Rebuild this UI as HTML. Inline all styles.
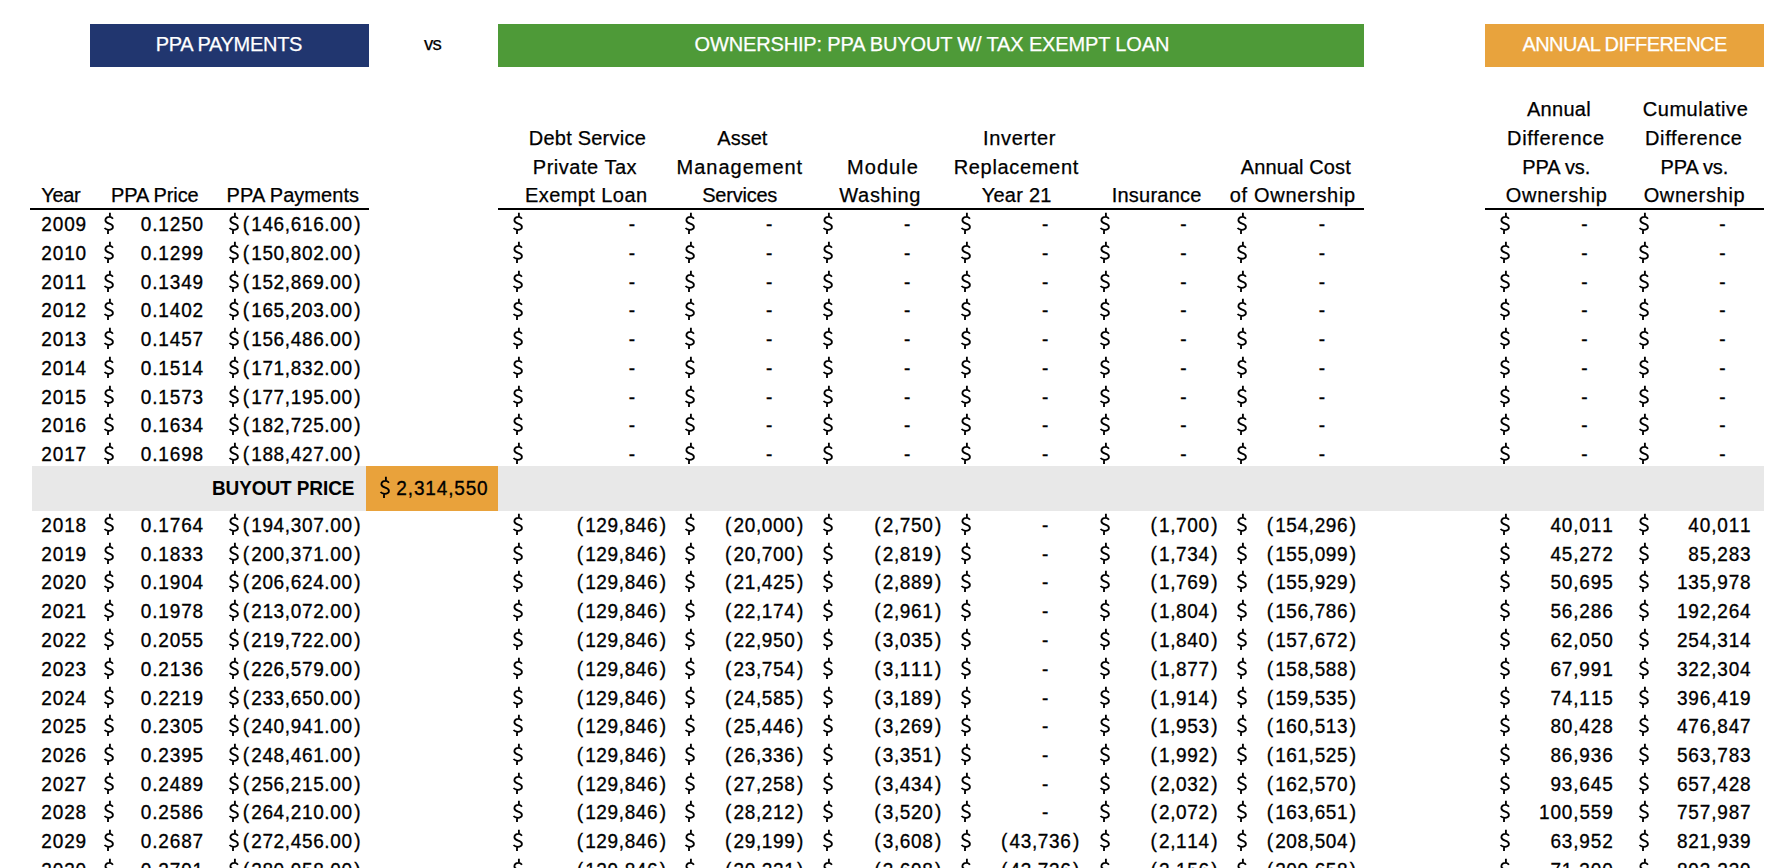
<!DOCTYPE html>
<html><head><meta charset="utf-8"><title>PPA vs Ownership</title>
<style>
html,body{margin:0;padding:0;background:#fff;}
body{width:1782px;height:868px;overflow:hidden;position:relative;font-family:"Liberation Sans",sans-serif;color:#000;}
.t{position:absolute;white-space:pre;font-size:19.0px;line-height:24px;height:24px;transform:scaleY(1.07);transform-origin:0 18px;-webkit-text-stroke:0.3px currentColor;}
.n{letter-spacing:0.0px;font-kerning:none;font-variant-numeric:tabular-nums;}
.h{font-size:20px;transform:none;-webkit-text-stroke:0.25px currentColor;}
.b{font-weight:bold;-webkit-text-stroke:0;}
.r{position:absolute;}
.t i{font-style:normal;margin:0 1.5px;}
.d{position:absolute;width:12px;height:25px;overflow:visible;}
</style></head><body>
<svg width="0" height="0" style="position:absolute"><defs><symbol id="ds" viewBox="-1 -20 12 25"><path d="M8.9,-12.3C8.1,-13.6 6.9,-14.2 5.4,-14.2C3.1,-14.2 1.4,-12.8 1.4,-10.7C1.4,-8.9 2.8,-8.1 5.2,-7.3C7.6,-6.5 8.9,-5.7 8.9,-4.1C8.9,-2.3 7.2,-1.2 4.8,-1.2C3,-1.2 1.5,-1.8 0.5,-3M5.9,-18.2V-14M4,-1.4V3" fill="none" stroke="#000" stroke-width="1.85"/></symbol></defs></svg>
<div class="r" style="left:90px;top:24px;width:279px;height:42.7px;background:#21366f"></div>
<div class="r" style="left:498px;top:24px;width:866px;height:42.7px;background:#4e9a38"></div>
<div class="r" style="left:1485.2px;top:24px;width:278.8px;height:42.7px;background:#e8a33d"></div>
<div class="r" style="left:30px;top:208px;width:339px;height:2px;background:#000"></div>
<div class="r" style="left:498px;top:208px;width:866px;height:2px;background:#000"></div>
<div class="r" style="left:1485.2px;top:208px;width:278.8px;height:2px;background:#000"></div>
<div class="r" style="left:32px;top:466.3px;width:1732px;height:45.2px;background:#e8e8e8"></div>
<div class="r" style="left:366px;top:466.3px;width:132px;height:45.2px;background:#e9a23b"></div>
<span class="t h" style="left:155.70px;top:32.00px;letter-spacing:-0.301px;color:#fff">PPA PAYMENTS</span>
<span class="t h" style="left:424.05px;top:32.00px;letter-spacing:-0.750px;font-size:18.5px">vs</span>
<span class="t h" style="left:694.50px;top:32.00px;letter-spacing:-0.144px;color:#fff">OWNERSHIP: PPA BUYOUT W/ TAX EXEMPT LOAN</span>
<span class="t h" style="left:1522.45px;top:32.00px;letter-spacing:-0.556px;color:#fff">ANNUAL DIFFERENCE</span>
<span class="t h" style="left:41.35px;top:183.00px;letter-spacing:-0.354px">Year</span>
<span class="t h" style="left:111.05px;top:183.00px;letter-spacing:-0.117px">PPA Price</span>
<span class="t h" style="left:226.60px;top:183.00px;letter-spacing:0.043px">PPA Payments</span>
<span class="t h" style="left:528.75px;top:126.00px;letter-spacing:0.229px">Debt Service</span>
<span class="t h" style="left:532.85px;top:155.00px;letter-spacing:0.512px">Private Tax</span>
<span class="t h" style="left:525.05px;top:183.00px;letter-spacing:0.416px">Exempt Loan</span>
<span class="t h" style="left:717.35px;top:126.00px;letter-spacing:0.006px">Asset</span>
<span class="t h" style="left:676.60px;top:155.00px;letter-spacing:0.979px">Management</span>
<span class="t h" style="left:702.25px;top:183.00px;letter-spacing:-0.229px">Services</span>
<span class="t h" style="left:847.05px;top:155.00px;letter-spacing:1.043px">Module</span>
<span class="t h" style="left:839.25px;top:183.00px;letter-spacing:0.691px">Washing</span>
<span class="t h" style="left:983.00px;top:126.00px;letter-spacing:0.664px">Inverter</span>
<span class="t h" style="left:953.70px;top:155.00px;letter-spacing:0.671px">Replacement</span>
<span class="t h" style="left:981.65px;top:183.00px;letter-spacing:0.267px">Year 21</span>
<span class="t h" style="left:1111.65px;top:183.00px;letter-spacing:0.247px">Insurance</span>
<span class="t h" style="left:1240.85px;top:155.00px;letter-spacing:0.089px">Annual Cost</span>
<span class="t h" style="left:1229.75px;top:183.00px;letter-spacing:0.689px">of Ownership</span>
<span class="t h" style="left:1526.95px;top:97.00px;letter-spacing:0.292px">Annual</span>
<span class="t h" style="left:1507.05px;top:126.00px;letter-spacing:0.692px">Difference</span>
<span class="t h" style="left:1522.25px;top:155.00px;letter-spacing:-0.082px">PPA vs.</span>
<span class="t h" style="left:1505.80px;top:183.00px;letter-spacing:0.689px">Ownership</span>
<span class="t h" style="left:1642.70px;top:97.00px;letter-spacing:0.564px">Cumulative</span>
<span class="t h" style="left:1644.95px;top:126.00px;letter-spacing:0.692px">Difference</span>
<span class="t h" style="left:1660.55px;top:155.00px;letter-spacing:-0.148px">PPA vs.</span>
<span class="t h" style="left:1643.65px;top:183.00px;letter-spacing:0.677px">Ownership</span>
<span class="t b" style="left:212.00px;top:477.00px;letter-spacing:-0.100px">BUYOUT PRICE</span>
<svg class="d" style="left:379.00px;top:475.00px"><use href="#ds"/></svg>
<span class="t n" style="left:396.37px;top:477.00px;letter-spacing:0.850px">2,314,550</span>
<span class="t n" style="left:41.37px;top:213.00px;letter-spacing:0.850px">2009</span>
<svg class="d" style="left:103.00px;top:211.00px"><use href="#ds"/></svg>
<span class="t n" style="left:140.83px;top:213.00px;letter-spacing:0.850px">0.1250</span>
<svg class="d" style="left:227.75px;top:211.00px"><use href="#ds"/></svg>
<span class="t n" style="left:242.74px;top:213.00px;letter-spacing:0.640px">(<i>146,616.00</i>)</span>
<svg class="d" style="left:511.60px;top:211.00px"><use href="#ds"/></svg>
<span class="t n" style="left:628.80px;top:213.00px">-</span>
<svg class="d" style="left:683.70px;top:211.00px"><use href="#ds"/></svg>
<span class="t n" style="left:766.00px;top:213.00px">-</span>
<svg class="d" style="left:822.00px;top:211.00px"><use href="#ds"/></svg>
<span class="t n" style="left:904.00px;top:213.00px">-</span>
<svg class="d" style="left:960.00px;top:211.00px"><use href="#ds"/></svg>
<span class="t n" style="left:1042.00px;top:213.00px">-</span>
<svg class="d" style="left:1098.50px;top:211.00px"><use href="#ds"/></svg>
<span class="t n" style="left:1180.20px;top:213.00px">-</span>
<svg class="d" style="left:1236.40px;top:211.00px"><use href="#ds"/></svg>
<span class="t n" style="left:1318.80px;top:213.00px">-</span>
<svg class="d" style="left:1499.00px;top:211.00px"><use href="#ds"/></svg>
<span class="t n" style="left:1581.30px;top:213.00px">-</span>
<svg class="d" style="left:1637.50px;top:211.00px"><use href="#ds"/></svg>
<span class="t n" style="left:1719.20px;top:213.00px">-</span>
<span class="t n" style="left:41.37px;top:242.00px;letter-spacing:0.850px">2010</span>
<svg class="d" style="left:103.00px;top:240.00px"><use href="#ds"/></svg>
<span class="t n" style="left:140.83px;top:242.00px;letter-spacing:0.850px">0.1299</span>
<svg class="d" style="left:227.75px;top:240.00px"><use href="#ds"/></svg>
<span class="t n" style="left:242.74px;top:242.00px;letter-spacing:0.640px">(<i>150,802.00</i>)</span>
<svg class="d" style="left:511.60px;top:240.00px"><use href="#ds"/></svg>
<span class="t n" style="left:628.80px;top:242.00px">-</span>
<svg class="d" style="left:683.70px;top:240.00px"><use href="#ds"/></svg>
<span class="t n" style="left:766.00px;top:242.00px">-</span>
<svg class="d" style="left:822.00px;top:240.00px"><use href="#ds"/></svg>
<span class="t n" style="left:904.00px;top:242.00px">-</span>
<svg class="d" style="left:960.00px;top:240.00px"><use href="#ds"/></svg>
<span class="t n" style="left:1042.00px;top:242.00px">-</span>
<svg class="d" style="left:1098.50px;top:240.00px"><use href="#ds"/></svg>
<span class="t n" style="left:1180.20px;top:242.00px">-</span>
<svg class="d" style="left:1236.40px;top:240.00px"><use href="#ds"/></svg>
<span class="t n" style="left:1318.80px;top:242.00px">-</span>
<svg class="d" style="left:1499.00px;top:240.00px"><use href="#ds"/></svg>
<span class="t n" style="left:1581.30px;top:242.00px">-</span>
<svg class="d" style="left:1637.50px;top:240.00px"><use href="#ds"/></svg>
<span class="t n" style="left:1719.20px;top:242.00px">-</span>
<span class="t n" style="left:41.37px;top:271.00px;letter-spacing:0.850px">2011</span>
<svg class="d" style="left:103.00px;top:269.00px"><use href="#ds"/></svg>
<span class="t n" style="left:140.83px;top:271.00px;letter-spacing:0.850px">0.1349</span>
<svg class="d" style="left:227.75px;top:269.00px"><use href="#ds"/></svg>
<span class="t n" style="left:242.74px;top:271.00px;letter-spacing:0.640px">(<i>152,869.00</i>)</span>
<svg class="d" style="left:511.60px;top:269.00px"><use href="#ds"/></svg>
<span class="t n" style="left:628.80px;top:271.00px">-</span>
<svg class="d" style="left:683.70px;top:269.00px"><use href="#ds"/></svg>
<span class="t n" style="left:766.00px;top:271.00px">-</span>
<svg class="d" style="left:822.00px;top:269.00px"><use href="#ds"/></svg>
<span class="t n" style="left:904.00px;top:271.00px">-</span>
<svg class="d" style="left:960.00px;top:269.00px"><use href="#ds"/></svg>
<span class="t n" style="left:1042.00px;top:271.00px">-</span>
<svg class="d" style="left:1098.50px;top:269.00px"><use href="#ds"/></svg>
<span class="t n" style="left:1180.20px;top:271.00px">-</span>
<svg class="d" style="left:1236.40px;top:269.00px"><use href="#ds"/></svg>
<span class="t n" style="left:1318.80px;top:271.00px">-</span>
<svg class="d" style="left:1499.00px;top:269.00px"><use href="#ds"/></svg>
<span class="t n" style="left:1581.30px;top:271.00px">-</span>
<svg class="d" style="left:1637.50px;top:269.00px"><use href="#ds"/></svg>
<span class="t n" style="left:1719.20px;top:271.00px">-</span>
<span class="t n" style="left:41.37px;top:299.00px;letter-spacing:0.850px">2012</span>
<svg class="d" style="left:103.00px;top:297.00px"><use href="#ds"/></svg>
<span class="t n" style="left:140.83px;top:299.00px;letter-spacing:0.850px">0.1402</span>
<svg class="d" style="left:227.75px;top:297.00px"><use href="#ds"/></svg>
<span class="t n" style="left:242.74px;top:299.00px;letter-spacing:0.640px">(<i>165,203.00</i>)</span>
<svg class="d" style="left:511.60px;top:297.00px"><use href="#ds"/></svg>
<span class="t n" style="left:628.80px;top:299.00px">-</span>
<svg class="d" style="left:683.70px;top:297.00px"><use href="#ds"/></svg>
<span class="t n" style="left:766.00px;top:299.00px">-</span>
<svg class="d" style="left:822.00px;top:297.00px"><use href="#ds"/></svg>
<span class="t n" style="left:904.00px;top:299.00px">-</span>
<svg class="d" style="left:960.00px;top:297.00px"><use href="#ds"/></svg>
<span class="t n" style="left:1042.00px;top:299.00px">-</span>
<svg class="d" style="left:1098.50px;top:297.00px"><use href="#ds"/></svg>
<span class="t n" style="left:1180.20px;top:299.00px">-</span>
<svg class="d" style="left:1236.40px;top:297.00px"><use href="#ds"/></svg>
<span class="t n" style="left:1318.80px;top:299.00px">-</span>
<svg class="d" style="left:1499.00px;top:297.00px"><use href="#ds"/></svg>
<span class="t n" style="left:1581.30px;top:299.00px">-</span>
<svg class="d" style="left:1637.50px;top:297.00px"><use href="#ds"/></svg>
<span class="t n" style="left:1719.20px;top:299.00px">-</span>
<span class="t n" style="left:41.37px;top:328.00px;letter-spacing:0.850px">2013</span>
<svg class="d" style="left:103.00px;top:326.00px"><use href="#ds"/></svg>
<span class="t n" style="left:140.83px;top:328.00px;letter-spacing:0.850px">0.1457</span>
<svg class="d" style="left:227.75px;top:326.00px"><use href="#ds"/></svg>
<span class="t n" style="left:242.74px;top:328.00px;letter-spacing:0.640px">(<i>156,486.00</i>)</span>
<svg class="d" style="left:511.60px;top:326.00px"><use href="#ds"/></svg>
<span class="t n" style="left:628.80px;top:328.00px">-</span>
<svg class="d" style="left:683.70px;top:326.00px"><use href="#ds"/></svg>
<span class="t n" style="left:766.00px;top:328.00px">-</span>
<svg class="d" style="left:822.00px;top:326.00px"><use href="#ds"/></svg>
<span class="t n" style="left:904.00px;top:328.00px">-</span>
<svg class="d" style="left:960.00px;top:326.00px"><use href="#ds"/></svg>
<span class="t n" style="left:1042.00px;top:328.00px">-</span>
<svg class="d" style="left:1098.50px;top:326.00px"><use href="#ds"/></svg>
<span class="t n" style="left:1180.20px;top:328.00px">-</span>
<svg class="d" style="left:1236.40px;top:326.00px"><use href="#ds"/></svg>
<span class="t n" style="left:1318.80px;top:328.00px">-</span>
<svg class="d" style="left:1499.00px;top:326.00px"><use href="#ds"/></svg>
<span class="t n" style="left:1581.30px;top:328.00px">-</span>
<svg class="d" style="left:1637.50px;top:326.00px"><use href="#ds"/></svg>
<span class="t n" style="left:1719.20px;top:328.00px">-</span>
<span class="t n" style="left:41.37px;top:357.00px;letter-spacing:0.850px">2014</span>
<svg class="d" style="left:103.00px;top:355.00px"><use href="#ds"/></svg>
<span class="t n" style="left:140.83px;top:357.00px;letter-spacing:0.850px">0.1514</span>
<svg class="d" style="left:227.75px;top:355.00px"><use href="#ds"/></svg>
<span class="t n" style="left:242.74px;top:357.00px;letter-spacing:0.640px">(<i>171,832.00</i>)</span>
<svg class="d" style="left:511.60px;top:355.00px"><use href="#ds"/></svg>
<span class="t n" style="left:628.80px;top:357.00px">-</span>
<svg class="d" style="left:683.70px;top:355.00px"><use href="#ds"/></svg>
<span class="t n" style="left:766.00px;top:357.00px">-</span>
<svg class="d" style="left:822.00px;top:355.00px"><use href="#ds"/></svg>
<span class="t n" style="left:904.00px;top:357.00px">-</span>
<svg class="d" style="left:960.00px;top:355.00px"><use href="#ds"/></svg>
<span class="t n" style="left:1042.00px;top:357.00px">-</span>
<svg class="d" style="left:1098.50px;top:355.00px"><use href="#ds"/></svg>
<span class="t n" style="left:1180.20px;top:357.00px">-</span>
<svg class="d" style="left:1236.40px;top:355.00px"><use href="#ds"/></svg>
<span class="t n" style="left:1318.80px;top:357.00px">-</span>
<svg class="d" style="left:1499.00px;top:355.00px"><use href="#ds"/></svg>
<span class="t n" style="left:1581.30px;top:357.00px">-</span>
<svg class="d" style="left:1637.50px;top:355.00px"><use href="#ds"/></svg>
<span class="t n" style="left:1719.20px;top:357.00px">-</span>
<span class="t n" style="left:41.37px;top:386.00px;letter-spacing:0.850px">2015</span>
<svg class="d" style="left:103.00px;top:384.00px"><use href="#ds"/></svg>
<span class="t n" style="left:140.83px;top:386.00px;letter-spacing:0.850px">0.1573</span>
<svg class="d" style="left:227.75px;top:384.00px"><use href="#ds"/></svg>
<span class="t n" style="left:242.74px;top:386.00px;letter-spacing:0.640px">(<i>177,195.00</i>)</span>
<svg class="d" style="left:511.60px;top:384.00px"><use href="#ds"/></svg>
<span class="t n" style="left:628.80px;top:386.00px">-</span>
<svg class="d" style="left:683.70px;top:384.00px"><use href="#ds"/></svg>
<span class="t n" style="left:766.00px;top:386.00px">-</span>
<svg class="d" style="left:822.00px;top:384.00px"><use href="#ds"/></svg>
<span class="t n" style="left:904.00px;top:386.00px">-</span>
<svg class="d" style="left:960.00px;top:384.00px"><use href="#ds"/></svg>
<span class="t n" style="left:1042.00px;top:386.00px">-</span>
<svg class="d" style="left:1098.50px;top:384.00px"><use href="#ds"/></svg>
<span class="t n" style="left:1180.20px;top:386.00px">-</span>
<svg class="d" style="left:1236.40px;top:384.00px"><use href="#ds"/></svg>
<span class="t n" style="left:1318.80px;top:386.00px">-</span>
<svg class="d" style="left:1499.00px;top:384.00px"><use href="#ds"/></svg>
<span class="t n" style="left:1581.30px;top:386.00px">-</span>
<svg class="d" style="left:1637.50px;top:384.00px"><use href="#ds"/></svg>
<span class="t n" style="left:1719.20px;top:386.00px">-</span>
<span class="t n" style="left:41.37px;top:414.00px;letter-spacing:0.850px">2016</span>
<svg class="d" style="left:103.00px;top:412.00px"><use href="#ds"/></svg>
<span class="t n" style="left:140.83px;top:414.00px;letter-spacing:0.850px">0.1634</span>
<svg class="d" style="left:227.75px;top:412.00px"><use href="#ds"/></svg>
<span class="t n" style="left:242.74px;top:414.00px;letter-spacing:0.640px">(<i>182,725.00</i>)</span>
<svg class="d" style="left:511.60px;top:412.00px"><use href="#ds"/></svg>
<span class="t n" style="left:628.80px;top:414.00px">-</span>
<svg class="d" style="left:683.70px;top:412.00px"><use href="#ds"/></svg>
<span class="t n" style="left:766.00px;top:414.00px">-</span>
<svg class="d" style="left:822.00px;top:412.00px"><use href="#ds"/></svg>
<span class="t n" style="left:904.00px;top:414.00px">-</span>
<svg class="d" style="left:960.00px;top:412.00px"><use href="#ds"/></svg>
<span class="t n" style="left:1042.00px;top:414.00px">-</span>
<svg class="d" style="left:1098.50px;top:412.00px"><use href="#ds"/></svg>
<span class="t n" style="left:1180.20px;top:414.00px">-</span>
<svg class="d" style="left:1236.40px;top:412.00px"><use href="#ds"/></svg>
<span class="t n" style="left:1318.80px;top:414.00px">-</span>
<svg class="d" style="left:1499.00px;top:412.00px"><use href="#ds"/></svg>
<span class="t n" style="left:1581.30px;top:414.00px">-</span>
<svg class="d" style="left:1637.50px;top:412.00px"><use href="#ds"/></svg>
<span class="t n" style="left:1719.20px;top:414.00px">-</span>
<span class="t n" style="left:41.37px;top:443.00px;letter-spacing:0.850px">2017</span>
<svg class="d" style="left:103.00px;top:441.00px"><use href="#ds"/></svg>
<span class="t n" style="left:140.83px;top:443.00px;letter-spacing:0.850px">0.1698</span>
<svg class="d" style="left:227.75px;top:441.00px"><use href="#ds"/></svg>
<span class="t n" style="left:242.74px;top:443.00px;letter-spacing:0.640px">(<i>188,427.00</i>)</span>
<svg class="d" style="left:511.60px;top:441.00px"><use href="#ds"/></svg>
<span class="t n" style="left:628.80px;top:443.00px">-</span>
<svg class="d" style="left:683.70px;top:441.00px"><use href="#ds"/></svg>
<span class="t n" style="left:766.00px;top:443.00px">-</span>
<svg class="d" style="left:822.00px;top:441.00px"><use href="#ds"/></svg>
<span class="t n" style="left:904.00px;top:443.00px">-</span>
<svg class="d" style="left:960.00px;top:441.00px"><use href="#ds"/></svg>
<span class="t n" style="left:1042.00px;top:443.00px">-</span>
<svg class="d" style="left:1098.50px;top:441.00px"><use href="#ds"/></svg>
<span class="t n" style="left:1180.20px;top:443.00px">-</span>
<svg class="d" style="left:1236.40px;top:441.00px"><use href="#ds"/></svg>
<span class="t n" style="left:1318.80px;top:443.00px">-</span>
<svg class="d" style="left:1499.00px;top:441.00px"><use href="#ds"/></svg>
<span class="t n" style="left:1581.30px;top:443.00px">-</span>
<svg class="d" style="left:1637.50px;top:441.00px"><use href="#ds"/></svg>
<span class="t n" style="left:1719.20px;top:443.00px">-</span>
<span class="t n" style="left:41.37px;top:514.00px;letter-spacing:0.850px">2018</span>
<svg class="d" style="left:103.00px;top:512.00px"><use href="#ds"/></svg>
<span class="t n" style="left:140.83px;top:514.00px;letter-spacing:0.850px">0.1764</span>
<svg class="d" style="left:227.75px;top:512.00px"><use href="#ds"/></svg>
<span class="t n" style="left:242.74px;top:514.00px;letter-spacing:0.640px">(<i>194,307.00</i>)</span>
<svg class="d" style="left:511.60px;top:512.00px"><use href="#ds"/></svg>
<span class="t n" style="left:576.66px;top:514.00px;letter-spacing:0.640px">(<i>129,846</i>)</span>
<svg class="d" style="left:683.70px;top:512.00px"><use href="#ds"/></svg>
<span class="t n" style="left:725.07px;top:514.00px;letter-spacing:0.640px">(<i>20,000</i>)</span>
<svg class="d" style="left:822.00px;top:512.00px"><use href="#ds"/></svg>
<span class="t n" style="left:874.28px;top:514.00px;letter-spacing:0.640px">(<i>2,750</i>)</span>
<svg class="d" style="left:960.00px;top:512.00px"><use href="#ds"/></svg>
<span class="t n" style="left:1042.00px;top:514.00px">-</span>
<svg class="d" style="left:1098.50px;top:512.00px"><use href="#ds"/></svg>
<span class="t n" style="left:1150.48px;top:514.00px;letter-spacing:0.640px">(<i>1,700</i>)</span>
<svg class="d" style="left:1236.40px;top:512.00px"><use href="#ds"/></svg>
<span class="t n" style="left:1266.66px;top:514.00px;letter-spacing:0.640px">(<i>154,296</i>)</span>
<svg class="d" style="left:1499.00px;top:512.00px"><use href="#ds"/></svg>
<span class="t n" style="left:1550.42px;top:514.00px;letter-spacing:0.850px">40,011</span>
<svg class="d" style="left:1637.50px;top:512.00px"><use href="#ds"/></svg>
<span class="t n" style="left:1688.32px;top:514.00px;letter-spacing:0.850px">40,011</span>
<span class="t n" style="left:41.37px;top:543.00px;letter-spacing:0.850px">2019</span>
<svg class="d" style="left:103.00px;top:541.00px"><use href="#ds"/></svg>
<span class="t n" style="left:140.83px;top:543.00px;letter-spacing:0.850px">0.1833</span>
<svg class="d" style="left:227.75px;top:541.00px"><use href="#ds"/></svg>
<span class="t n" style="left:242.74px;top:543.00px;letter-spacing:0.640px">(<i>200,371.00</i>)</span>
<svg class="d" style="left:511.60px;top:541.00px"><use href="#ds"/></svg>
<span class="t n" style="left:576.66px;top:543.00px;letter-spacing:0.640px">(<i>129,846</i>)</span>
<svg class="d" style="left:683.70px;top:541.00px"><use href="#ds"/></svg>
<span class="t n" style="left:725.07px;top:543.00px;letter-spacing:0.640px">(<i>20,700</i>)</span>
<svg class="d" style="left:822.00px;top:541.00px"><use href="#ds"/></svg>
<span class="t n" style="left:874.28px;top:543.00px;letter-spacing:0.640px">(<i>2,819</i>)</span>
<svg class="d" style="left:960.00px;top:541.00px"><use href="#ds"/></svg>
<span class="t n" style="left:1042.00px;top:543.00px">-</span>
<svg class="d" style="left:1098.50px;top:541.00px"><use href="#ds"/></svg>
<span class="t n" style="left:1150.48px;top:543.00px;letter-spacing:0.640px">(<i>1,734</i>)</span>
<svg class="d" style="left:1236.40px;top:541.00px"><use href="#ds"/></svg>
<span class="t n" style="left:1266.66px;top:543.00px;letter-spacing:0.640px">(<i>155,099</i>)</span>
<svg class="d" style="left:1499.00px;top:541.00px"><use href="#ds"/></svg>
<span class="t n" style="left:1550.42px;top:543.00px;letter-spacing:0.850px">45,272</span>
<svg class="d" style="left:1637.50px;top:541.00px"><use href="#ds"/></svg>
<span class="t n" style="left:1688.32px;top:543.00px;letter-spacing:0.850px">85,283</span>
<span class="t n" style="left:41.37px;top:571.00px;letter-spacing:0.850px">2020</span>
<svg class="d" style="left:103.00px;top:569.00px"><use href="#ds"/></svg>
<span class="t n" style="left:140.83px;top:571.00px;letter-spacing:0.850px">0.1904</span>
<svg class="d" style="left:227.75px;top:569.00px"><use href="#ds"/></svg>
<span class="t n" style="left:242.74px;top:571.00px;letter-spacing:0.640px">(<i>206,624.00</i>)</span>
<svg class="d" style="left:511.60px;top:569.00px"><use href="#ds"/></svg>
<span class="t n" style="left:576.66px;top:571.00px;letter-spacing:0.640px">(<i>129,846</i>)</span>
<svg class="d" style="left:683.70px;top:569.00px"><use href="#ds"/></svg>
<span class="t n" style="left:725.07px;top:571.00px;letter-spacing:0.640px">(<i>21,425</i>)</span>
<svg class="d" style="left:822.00px;top:569.00px"><use href="#ds"/></svg>
<span class="t n" style="left:874.28px;top:571.00px;letter-spacing:0.640px">(<i>2,889</i>)</span>
<svg class="d" style="left:960.00px;top:569.00px"><use href="#ds"/></svg>
<span class="t n" style="left:1042.00px;top:571.00px">-</span>
<svg class="d" style="left:1098.50px;top:569.00px"><use href="#ds"/></svg>
<span class="t n" style="left:1150.48px;top:571.00px;letter-spacing:0.640px">(<i>1,769</i>)</span>
<svg class="d" style="left:1236.40px;top:569.00px"><use href="#ds"/></svg>
<span class="t n" style="left:1266.66px;top:571.00px;letter-spacing:0.640px">(<i>155,929</i>)</span>
<svg class="d" style="left:1499.00px;top:569.00px"><use href="#ds"/></svg>
<span class="t n" style="left:1550.42px;top:571.00px;letter-spacing:0.850px">50,695</span>
<svg class="d" style="left:1637.50px;top:569.00px"><use href="#ds"/></svg>
<span class="t n" style="left:1676.91px;top:571.00px;letter-spacing:0.850px">135,978</span>
<span class="t n" style="left:41.37px;top:600.00px;letter-spacing:0.850px">2021</span>
<svg class="d" style="left:103.00px;top:598.00px"><use href="#ds"/></svg>
<span class="t n" style="left:140.83px;top:600.00px;letter-spacing:0.850px">0.1978</span>
<svg class="d" style="left:227.75px;top:598.00px"><use href="#ds"/></svg>
<span class="t n" style="left:242.74px;top:600.00px;letter-spacing:0.640px">(<i>213,072.00</i>)</span>
<svg class="d" style="left:511.60px;top:598.00px"><use href="#ds"/></svg>
<span class="t n" style="left:576.66px;top:600.00px;letter-spacing:0.640px">(<i>129,846</i>)</span>
<svg class="d" style="left:683.70px;top:598.00px"><use href="#ds"/></svg>
<span class="t n" style="left:725.07px;top:600.00px;letter-spacing:0.640px">(<i>22,174</i>)</span>
<svg class="d" style="left:822.00px;top:598.00px"><use href="#ds"/></svg>
<span class="t n" style="left:874.28px;top:600.00px;letter-spacing:0.640px">(<i>2,961</i>)</span>
<svg class="d" style="left:960.00px;top:598.00px"><use href="#ds"/></svg>
<span class="t n" style="left:1042.00px;top:600.00px">-</span>
<svg class="d" style="left:1098.50px;top:598.00px"><use href="#ds"/></svg>
<span class="t n" style="left:1150.48px;top:600.00px;letter-spacing:0.640px">(<i>1,804</i>)</span>
<svg class="d" style="left:1236.40px;top:598.00px"><use href="#ds"/></svg>
<span class="t n" style="left:1266.66px;top:600.00px;letter-spacing:0.640px">(<i>156,786</i>)</span>
<svg class="d" style="left:1499.00px;top:598.00px"><use href="#ds"/></svg>
<span class="t n" style="left:1550.42px;top:600.00px;letter-spacing:0.850px">56,286</span>
<svg class="d" style="left:1637.50px;top:598.00px"><use href="#ds"/></svg>
<span class="t n" style="left:1676.91px;top:600.00px;letter-spacing:0.850px">192,264</span>
<span class="t n" style="left:41.37px;top:629.00px;letter-spacing:0.850px">2022</span>
<svg class="d" style="left:103.00px;top:627.00px"><use href="#ds"/></svg>
<span class="t n" style="left:140.83px;top:629.00px;letter-spacing:0.850px">0.2055</span>
<svg class="d" style="left:227.75px;top:627.00px"><use href="#ds"/></svg>
<span class="t n" style="left:242.74px;top:629.00px;letter-spacing:0.640px">(<i>219,722.00</i>)</span>
<svg class="d" style="left:511.60px;top:627.00px"><use href="#ds"/></svg>
<span class="t n" style="left:576.66px;top:629.00px;letter-spacing:0.640px">(<i>129,846</i>)</span>
<svg class="d" style="left:683.70px;top:627.00px"><use href="#ds"/></svg>
<span class="t n" style="left:725.07px;top:629.00px;letter-spacing:0.640px">(<i>22,950</i>)</span>
<svg class="d" style="left:822.00px;top:627.00px"><use href="#ds"/></svg>
<span class="t n" style="left:874.28px;top:629.00px;letter-spacing:0.640px">(<i>3,035</i>)</span>
<svg class="d" style="left:960.00px;top:627.00px"><use href="#ds"/></svg>
<span class="t n" style="left:1042.00px;top:629.00px">-</span>
<svg class="d" style="left:1098.50px;top:627.00px"><use href="#ds"/></svg>
<span class="t n" style="left:1150.48px;top:629.00px;letter-spacing:0.640px">(<i>1,840</i>)</span>
<svg class="d" style="left:1236.40px;top:627.00px"><use href="#ds"/></svg>
<span class="t n" style="left:1266.66px;top:629.00px;letter-spacing:0.640px">(<i>157,672</i>)</span>
<svg class="d" style="left:1499.00px;top:627.00px"><use href="#ds"/></svg>
<span class="t n" style="left:1550.42px;top:629.00px;letter-spacing:0.850px">62,050</span>
<svg class="d" style="left:1637.50px;top:627.00px"><use href="#ds"/></svg>
<span class="t n" style="left:1676.91px;top:629.00px;letter-spacing:0.850px">254,314</span>
<span class="t n" style="left:41.37px;top:658.00px;letter-spacing:0.850px">2023</span>
<svg class="d" style="left:103.00px;top:656.00px"><use href="#ds"/></svg>
<span class="t n" style="left:140.83px;top:658.00px;letter-spacing:0.850px">0.2136</span>
<svg class="d" style="left:227.75px;top:656.00px"><use href="#ds"/></svg>
<span class="t n" style="left:242.74px;top:658.00px;letter-spacing:0.640px">(<i>226,579.00</i>)</span>
<svg class="d" style="left:511.60px;top:656.00px"><use href="#ds"/></svg>
<span class="t n" style="left:576.66px;top:658.00px;letter-spacing:0.640px">(<i>129,846</i>)</span>
<svg class="d" style="left:683.70px;top:656.00px"><use href="#ds"/></svg>
<span class="t n" style="left:725.07px;top:658.00px;letter-spacing:0.640px">(<i>23,754</i>)</span>
<svg class="d" style="left:822.00px;top:656.00px"><use href="#ds"/></svg>
<span class="t n" style="left:874.28px;top:658.00px;letter-spacing:0.640px">(<i>3,111</i>)</span>
<svg class="d" style="left:960.00px;top:656.00px"><use href="#ds"/></svg>
<span class="t n" style="left:1042.00px;top:658.00px">-</span>
<svg class="d" style="left:1098.50px;top:656.00px"><use href="#ds"/></svg>
<span class="t n" style="left:1150.48px;top:658.00px;letter-spacing:0.640px">(<i>1,877</i>)</span>
<svg class="d" style="left:1236.40px;top:656.00px"><use href="#ds"/></svg>
<span class="t n" style="left:1266.66px;top:658.00px;letter-spacing:0.640px">(<i>158,588</i>)</span>
<svg class="d" style="left:1499.00px;top:656.00px"><use href="#ds"/></svg>
<span class="t n" style="left:1550.42px;top:658.00px;letter-spacing:0.850px">67,991</span>
<svg class="d" style="left:1637.50px;top:656.00px"><use href="#ds"/></svg>
<span class="t n" style="left:1676.91px;top:658.00px;letter-spacing:0.850px">322,304</span>
<span class="t n" style="left:41.37px;top:687.00px;letter-spacing:0.850px">2024</span>
<svg class="d" style="left:103.00px;top:685.00px"><use href="#ds"/></svg>
<span class="t n" style="left:140.83px;top:687.00px;letter-spacing:0.850px">0.2219</span>
<svg class="d" style="left:227.75px;top:685.00px"><use href="#ds"/></svg>
<span class="t n" style="left:242.74px;top:687.00px;letter-spacing:0.640px">(<i>233,650.00</i>)</span>
<svg class="d" style="left:511.60px;top:685.00px"><use href="#ds"/></svg>
<span class="t n" style="left:576.66px;top:687.00px;letter-spacing:0.640px">(<i>129,846</i>)</span>
<svg class="d" style="left:683.70px;top:685.00px"><use href="#ds"/></svg>
<span class="t n" style="left:725.07px;top:687.00px;letter-spacing:0.640px">(<i>24,585</i>)</span>
<svg class="d" style="left:822.00px;top:685.00px"><use href="#ds"/></svg>
<span class="t n" style="left:874.28px;top:687.00px;letter-spacing:0.640px">(<i>3,189</i>)</span>
<svg class="d" style="left:960.00px;top:685.00px"><use href="#ds"/></svg>
<span class="t n" style="left:1042.00px;top:687.00px">-</span>
<svg class="d" style="left:1098.50px;top:685.00px"><use href="#ds"/></svg>
<span class="t n" style="left:1150.48px;top:687.00px;letter-spacing:0.640px">(<i>1,914</i>)</span>
<svg class="d" style="left:1236.40px;top:685.00px"><use href="#ds"/></svg>
<span class="t n" style="left:1266.66px;top:687.00px;letter-spacing:0.640px">(<i>159,535</i>)</span>
<svg class="d" style="left:1499.00px;top:685.00px"><use href="#ds"/></svg>
<span class="t n" style="left:1550.42px;top:687.00px;letter-spacing:0.850px">74,115</span>
<svg class="d" style="left:1637.50px;top:685.00px"><use href="#ds"/></svg>
<span class="t n" style="left:1676.91px;top:687.00px;letter-spacing:0.850px">396,419</span>
<span class="t n" style="left:41.37px;top:715.00px;letter-spacing:0.850px">2025</span>
<svg class="d" style="left:103.00px;top:713.00px"><use href="#ds"/></svg>
<span class="t n" style="left:140.83px;top:715.00px;letter-spacing:0.850px">0.2305</span>
<svg class="d" style="left:227.75px;top:713.00px"><use href="#ds"/></svg>
<span class="t n" style="left:242.74px;top:715.00px;letter-spacing:0.640px">(<i>240,941.00</i>)</span>
<svg class="d" style="left:511.60px;top:713.00px"><use href="#ds"/></svg>
<span class="t n" style="left:576.66px;top:715.00px;letter-spacing:0.640px">(<i>129,846</i>)</span>
<svg class="d" style="left:683.70px;top:713.00px"><use href="#ds"/></svg>
<span class="t n" style="left:725.07px;top:715.00px;letter-spacing:0.640px">(<i>25,446</i>)</span>
<svg class="d" style="left:822.00px;top:713.00px"><use href="#ds"/></svg>
<span class="t n" style="left:874.28px;top:715.00px;letter-spacing:0.640px">(<i>3,269</i>)</span>
<svg class="d" style="left:960.00px;top:713.00px"><use href="#ds"/></svg>
<span class="t n" style="left:1042.00px;top:715.00px">-</span>
<svg class="d" style="left:1098.50px;top:713.00px"><use href="#ds"/></svg>
<span class="t n" style="left:1150.48px;top:715.00px;letter-spacing:0.640px">(<i>1,953</i>)</span>
<svg class="d" style="left:1236.40px;top:713.00px"><use href="#ds"/></svg>
<span class="t n" style="left:1266.66px;top:715.00px;letter-spacing:0.640px">(<i>160,513</i>)</span>
<svg class="d" style="left:1499.00px;top:713.00px"><use href="#ds"/></svg>
<span class="t n" style="left:1550.42px;top:715.00px;letter-spacing:0.850px">80,428</span>
<svg class="d" style="left:1637.50px;top:713.00px"><use href="#ds"/></svg>
<span class="t n" style="left:1676.91px;top:715.00px;letter-spacing:0.850px">476,847</span>
<span class="t n" style="left:41.37px;top:744.00px;letter-spacing:0.850px">2026</span>
<svg class="d" style="left:103.00px;top:742.00px"><use href="#ds"/></svg>
<span class="t n" style="left:140.83px;top:744.00px;letter-spacing:0.850px">0.2395</span>
<svg class="d" style="left:227.75px;top:742.00px"><use href="#ds"/></svg>
<span class="t n" style="left:242.74px;top:744.00px;letter-spacing:0.640px">(<i>248,461.00</i>)</span>
<svg class="d" style="left:511.60px;top:742.00px"><use href="#ds"/></svg>
<span class="t n" style="left:576.66px;top:744.00px;letter-spacing:0.640px">(<i>129,846</i>)</span>
<svg class="d" style="left:683.70px;top:742.00px"><use href="#ds"/></svg>
<span class="t n" style="left:725.07px;top:744.00px;letter-spacing:0.640px">(<i>26,336</i>)</span>
<svg class="d" style="left:822.00px;top:742.00px"><use href="#ds"/></svg>
<span class="t n" style="left:874.28px;top:744.00px;letter-spacing:0.640px">(<i>3,351</i>)</span>
<svg class="d" style="left:960.00px;top:742.00px"><use href="#ds"/></svg>
<span class="t n" style="left:1042.00px;top:744.00px">-</span>
<svg class="d" style="left:1098.50px;top:742.00px"><use href="#ds"/></svg>
<span class="t n" style="left:1150.48px;top:744.00px;letter-spacing:0.640px">(<i>1,992</i>)</span>
<svg class="d" style="left:1236.40px;top:742.00px"><use href="#ds"/></svg>
<span class="t n" style="left:1266.66px;top:744.00px;letter-spacing:0.640px">(<i>161,525</i>)</span>
<svg class="d" style="left:1499.00px;top:742.00px"><use href="#ds"/></svg>
<span class="t n" style="left:1550.42px;top:744.00px;letter-spacing:0.850px">86,936</span>
<svg class="d" style="left:1637.50px;top:742.00px"><use href="#ds"/></svg>
<span class="t n" style="left:1676.91px;top:744.00px;letter-spacing:0.850px">563,783</span>
<span class="t n" style="left:41.37px;top:773.00px;letter-spacing:0.850px">2027</span>
<svg class="d" style="left:103.00px;top:771.00px"><use href="#ds"/></svg>
<span class="t n" style="left:140.83px;top:773.00px;letter-spacing:0.850px">0.2489</span>
<svg class="d" style="left:227.75px;top:771.00px"><use href="#ds"/></svg>
<span class="t n" style="left:242.74px;top:773.00px;letter-spacing:0.640px">(<i>256,215.00</i>)</span>
<svg class="d" style="left:511.60px;top:771.00px"><use href="#ds"/></svg>
<span class="t n" style="left:576.66px;top:773.00px;letter-spacing:0.640px">(<i>129,846</i>)</span>
<svg class="d" style="left:683.70px;top:771.00px"><use href="#ds"/></svg>
<span class="t n" style="left:725.07px;top:773.00px;letter-spacing:0.640px">(<i>27,258</i>)</span>
<svg class="d" style="left:822.00px;top:771.00px"><use href="#ds"/></svg>
<span class="t n" style="left:874.28px;top:773.00px;letter-spacing:0.640px">(<i>3,434</i>)</span>
<svg class="d" style="left:960.00px;top:771.00px"><use href="#ds"/></svg>
<span class="t n" style="left:1042.00px;top:773.00px">-</span>
<svg class="d" style="left:1098.50px;top:771.00px"><use href="#ds"/></svg>
<span class="t n" style="left:1150.48px;top:773.00px;letter-spacing:0.640px">(<i>2,032</i>)</span>
<svg class="d" style="left:1236.40px;top:771.00px"><use href="#ds"/></svg>
<span class="t n" style="left:1266.66px;top:773.00px;letter-spacing:0.640px">(<i>162,570</i>)</span>
<svg class="d" style="left:1499.00px;top:771.00px"><use href="#ds"/></svg>
<span class="t n" style="left:1550.42px;top:773.00px;letter-spacing:0.850px">93,645</span>
<svg class="d" style="left:1637.50px;top:771.00px"><use href="#ds"/></svg>
<span class="t n" style="left:1676.91px;top:773.00px;letter-spacing:0.850px">657,428</span>
<span class="t n" style="left:41.37px;top:801.00px;letter-spacing:0.850px">2028</span>
<svg class="d" style="left:103.00px;top:799.00px"><use href="#ds"/></svg>
<span class="t n" style="left:140.83px;top:801.00px;letter-spacing:0.850px">0.2586</span>
<svg class="d" style="left:227.75px;top:799.00px"><use href="#ds"/></svg>
<span class="t n" style="left:242.74px;top:801.00px;letter-spacing:0.640px">(<i>264,210.00</i>)</span>
<svg class="d" style="left:511.60px;top:799.00px"><use href="#ds"/></svg>
<span class="t n" style="left:576.66px;top:801.00px;letter-spacing:0.640px">(<i>129,846</i>)</span>
<svg class="d" style="left:683.70px;top:799.00px"><use href="#ds"/></svg>
<span class="t n" style="left:725.07px;top:801.00px;letter-spacing:0.640px">(<i>28,212</i>)</span>
<svg class="d" style="left:822.00px;top:799.00px"><use href="#ds"/></svg>
<span class="t n" style="left:874.28px;top:801.00px;letter-spacing:0.640px">(<i>3,520</i>)</span>
<svg class="d" style="left:960.00px;top:799.00px"><use href="#ds"/></svg>
<span class="t n" style="left:1042.00px;top:801.00px">-</span>
<svg class="d" style="left:1098.50px;top:799.00px"><use href="#ds"/></svg>
<span class="t n" style="left:1150.48px;top:801.00px;letter-spacing:0.640px">(<i>2,072</i>)</span>
<svg class="d" style="left:1236.40px;top:799.00px"><use href="#ds"/></svg>
<span class="t n" style="left:1266.66px;top:801.00px;letter-spacing:0.640px">(<i>163,651</i>)</span>
<svg class="d" style="left:1499.00px;top:799.00px"><use href="#ds"/></svg>
<span class="t n" style="left:1539.01px;top:801.00px;letter-spacing:0.850px">100,559</span>
<svg class="d" style="left:1637.50px;top:799.00px"><use href="#ds"/></svg>
<span class="t n" style="left:1676.91px;top:801.00px;letter-spacing:0.850px">757,987</span>
<span class="t n" style="left:41.37px;top:830.00px;letter-spacing:0.850px">2029</span>
<svg class="d" style="left:103.00px;top:828.00px"><use href="#ds"/></svg>
<span class="t n" style="left:140.83px;top:830.00px;letter-spacing:0.850px">0.2687</span>
<svg class="d" style="left:227.75px;top:828.00px"><use href="#ds"/></svg>
<span class="t n" style="left:242.74px;top:830.00px;letter-spacing:0.640px">(<i>272,456.00</i>)</span>
<svg class="d" style="left:511.60px;top:828.00px"><use href="#ds"/></svg>
<span class="t n" style="left:576.66px;top:830.00px;letter-spacing:0.640px">(<i>129,846</i>)</span>
<svg class="d" style="left:683.70px;top:828.00px"><use href="#ds"/></svg>
<span class="t n" style="left:725.07px;top:830.00px;letter-spacing:0.640px">(<i>29,199</i>)</span>
<svg class="d" style="left:822.00px;top:828.00px"><use href="#ds"/></svg>
<span class="t n" style="left:874.28px;top:830.00px;letter-spacing:0.640px">(<i>3,608</i>)</span>
<svg class="d" style="left:960.00px;top:828.00px"><use href="#ds"/></svg>
<span class="t n" style="left:1001.07px;top:830.00px;letter-spacing:0.640px">(<i>43,736</i>)</span>
<svg class="d" style="left:1098.50px;top:828.00px"><use href="#ds"/></svg>
<span class="t n" style="left:1150.48px;top:830.00px;letter-spacing:0.640px">(<i>2,114</i>)</span>
<svg class="d" style="left:1236.40px;top:828.00px"><use href="#ds"/></svg>
<span class="t n" style="left:1266.66px;top:830.00px;letter-spacing:0.640px">(<i>208,504</i>)</span>
<svg class="d" style="left:1499.00px;top:828.00px"><use href="#ds"/></svg>
<span class="t n" style="left:1550.42px;top:830.00px;letter-spacing:0.850px">63,952</span>
<svg class="d" style="left:1637.50px;top:828.00px"><use href="#ds"/></svg>
<span class="t n" style="left:1676.91px;top:830.00px;letter-spacing:0.850px">821,939</span>
<span class="t n" style="left:41.37px;top:859.00px;letter-spacing:0.850px">2030</span>
<svg class="d" style="left:103.00px;top:857.00px"><use href="#ds"/></svg>
<span class="t n" style="left:140.83px;top:859.00px;letter-spacing:0.850px">0.2791</span>
<svg class="d" style="left:227.75px;top:857.00px"><use href="#ds"/></svg>
<span class="t n" style="left:242.74px;top:859.00px;letter-spacing:0.640px">(<i>280,958.00</i>)</span>
<svg class="d" style="left:511.60px;top:857.00px"><use href="#ds"/></svg>
<span class="t n" style="left:576.66px;top:859.00px;letter-spacing:0.640px">(<i>129,846</i>)</span>
<svg class="d" style="left:683.70px;top:857.00px"><use href="#ds"/></svg>
<span class="t n" style="left:725.07px;top:859.00px;letter-spacing:0.640px">(<i>30,221</i>)</span>
<svg class="d" style="left:822.00px;top:857.00px"><use href="#ds"/></svg>
<span class="t n" style="left:874.28px;top:859.00px;letter-spacing:0.640px">(<i>3,698</i>)</span>
<svg class="d" style="left:960.00px;top:857.00px"><use href="#ds"/></svg>
<span class="t n" style="left:1001.07px;top:859.00px;letter-spacing:0.640px">(<i>43,736</i>)</span>
<svg class="d" style="left:1098.50px;top:857.00px"><use href="#ds"/></svg>
<span class="t n" style="left:1150.48px;top:859.00px;letter-spacing:0.640px">(<i>2,156</i>)</span>
<svg class="d" style="left:1236.40px;top:857.00px"><use href="#ds"/></svg>
<span class="t n" style="left:1266.66px;top:859.00px;letter-spacing:0.640px">(<i>209,658</i>)</span>
<svg class="d" style="left:1499.00px;top:857.00px"><use href="#ds"/></svg>
<span class="t n" style="left:1550.42px;top:859.00px;letter-spacing:0.850px">71,300</span>
<svg class="d" style="left:1637.50px;top:857.00px"><use href="#ds"/></svg>
<span class="t n" style="left:1676.91px;top:859.00px;letter-spacing:0.850px">893,239</span>
</body></html>
